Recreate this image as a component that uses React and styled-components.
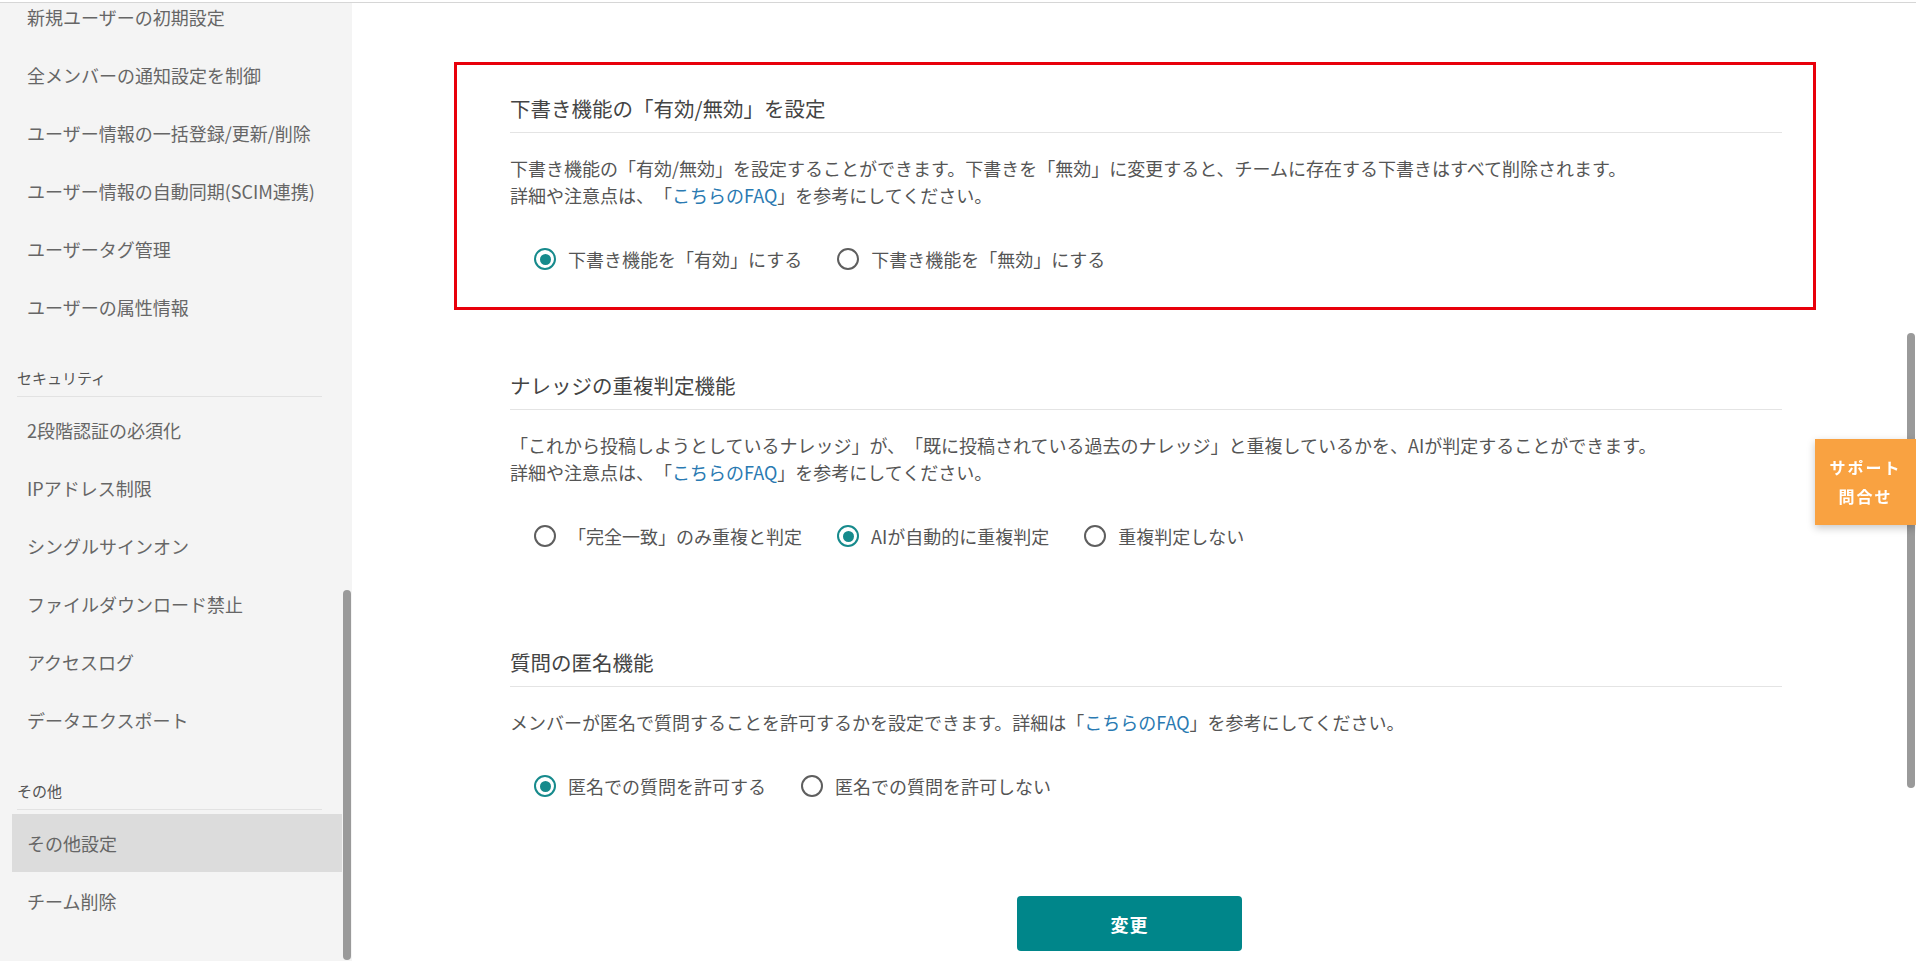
import React from "react";
import styled, { createGlobalStyle } from "styled-components";

const GlobalStyle = createGlobalStyle`
  html, body {
    margin: 0;
    padding: 0;
    background: #ffffff;
    overflow: hidden;
  }
  body {
    font-family: "Noto Sans CJK JP", "Noto Sans", "Liberation Sans", sans-serif;
    color: #555;
    text-spacing-trim: space-all;
  }
  * { box-sizing: border-box; }
`;

const TopRule = styled.div`
  height: 3px;
  background: #fff;
  border-bottom: 1px solid #d6d6d6;
`;

const Body = styled.div`
  display: flex;
  height: 958px;
`;

const Sidebar = styled.aside`
  position: relative;
  width: 352px;
  flex: 0 0 352px;
  background: #f4f4f4;
  overflow: hidden;
`;

const Nav = styled.nav`
  margin-top: -15px;
  padding: 0 10px 0 12px;
`;

const NavItem = styled.div`
  height: 58px;
  display: flex;
  align-items: center;
  padding-left: 15px;
  font-size: 18px;
  color: #666;
  background: ${(p) => (p.$active ? "#dcdcdc" : "transparent")};
  white-space: nowrap;
`;

const GroupHeader = styled.div`
  margin: 31px 20px 0 5px;
  padding-bottom: 7px;
  font-size: 15px;
  line-height: 22px;
  color: #555;
  border-bottom: 1px solid #e2e2e2;
`;

const GroupItems = styled.div`
  margin-top: ${(p) => (p.$first ? 0 : 4)}px;
`;

const Thumb = styled.div`
  position: absolute;
  right: 1px;
  top: ${(p) => p.$top}px;
  width: 8px;
  height: ${(p) => p.$height}px;
  border-radius: 4px;
  background: #9a9a9a;
`;

const Main = styled.main`
  position: relative;
  flex: 1;
  padding: 59px 100px 0 102px;
  overflow: hidden;
`;

const SectionList = styled.div`
  display: flex;
  flex-direction: column;
  gap: 29px;
`;

const Section = styled.section`
  border: 3px solid ${(p) => (p.$highlight ? "#e8000b" : "transparent")};
  padding: 29px 31px 33px 53px;
`;

const Title = styled.h2`
  margin: 0;
  font-size: 20.5px;
  line-height: 28px;
  font-weight: 400;
  color: #444;
  padding-bottom: 10px;
  border-bottom: 1px solid #e4e4e4;
`;

const Desc = styled.p`
  margin: 22px 0 0;
  font-size: 18px;
  line-height: 27px;
  color: #555;
`;

const Link = styled.a`
  color: #2a7ab2;
  text-decoration: none;
`;

const RadioGroup = styled.div`
  display: flex;
  align-items: center;
  gap: 35px;
  margin-top: 35px;
  padding-left: 24px;
  height: 30px;
`;

const RadioLabel = styled.label`
  display: flex;
  align-items: center;
  gap: 12px;
  font-size: 18px;
  color: #555;
  white-space: nowrap;
`;

const RadioCircle = styled.span`
  position: relative;
  width: 22px;
  height: 22px;
  border-radius: 50%;
  border: ${(p) => (p.$checked ? "2.5px solid #168a8c" : "2px solid #5e5e5e")};
  flex: 0 0 22px;
  &::after {
    content: "";
    display: ${(p) => (p.$checked ? "block" : "none")};
    position: absolute;
    left: 50%;
    top: 50%;
    width: 11px;
    height: 11px;
    margin: -5.5px 0 0 -5.5px;
    border-radius: 50%;
    background: #168a8c;
  }
`;

const ButtonRow = styled.div`
  display: flex;
  justify-content: center;
  margin-top: 59px;
  padding-right: 11px;
`;

const SubmitButton = styled.button`
  width: 225px;
  height: 55px;
  border: none;
  border-radius: 4px;
  background: #00868a;
  color: #fff;
  font-family: inherit;
  font-size: 18px;
  font-weight: 700;
  letter-spacing: 1px;
`;

const SupportTab = styled.div`
  position: fixed;
  top: 439px;
  right: 0;
  width: 101px;
  height: 86px;
  background: #f9a241;
  box-shadow: 0 3px 8px rgba(0, 0, 0, 0.22);
  display: flex;
  flex-direction: column;
  align-items: center;
  justify-content: center;
  color: #fff;
  font-size: 16px;
  font-weight: 700;
  line-height: 29px;
  letter-spacing: 2px;
`;

const Radio = ({ checked, children }) => (
  <RadioLabel>
    <RadioCircle $checked={checked} />
    {children}
  </RadioLabel>
);

const groups = [
  {
    header: null,
    items: [
      "新規ユーザーの初期設定",
      "全メンバーの通知設定を制御",
      "ユーザー情報の一括登録/更新/削除",
      "ユーザー情報の自動同期(SCIM連携)",
      "ユーザータグ管理",
      "ユーザーの属性情報",
    ],
  },
  {
    header: "セキュリティ",
    items: [
      "2段階認証の必須化",
      "IPアドレス制限",
      "シングルサインオン",
      "ファイルダウンロード禁止",
      "アクセスログ",
      "データエクスポート",
    ],
  },
  {
    header: "その他",
    items: ["その他設定", "チーム削除"],
  },
];

export default function App() {
  return (
    <>
      <GlobalStyle />
      <TopRule />
      <Body>
        <Sidebar>
          <Nav>
            {groups.map((g, gi) => (
              <React.Fragment key={gi}>
                {g.header && <GroupHeader>{g.header}</GroupHeader>}
                <GroupItems $first={!g.header}>
                  {g.items.map((it) => (
                    <NavItem key={it} $active={it === "その他設定"}>
                      {it}
                    </NavItem>
                  ))}
                </GroupItems>
              </React.Fragment>
            ))}
          </Nav>
          <Thumb $top={587} $height={370} />
        </Sidebar>
        <Main>
          <SectionList>
            <Section $highlight>
              <Title>下書き機能の「有効/無効」を設定</Title>
              <Desc>
                下書き機能の「有効/無効」を設定することができます。下書きを「無効」に変更すると、チームに存在する下書きはすべて削除されます。
                <br />
                詳細や注意点は、「<Link href="#">こちらのFAQ</Link>」を参考にしてください。
              </Desc>
              <RadioGroup>
                <Radio checked>下書き機能を「有効」にする</Radio>
                <Radio>下書き機能を「無効」にする</Radio>
              </RadioGroup>
            </Section>
            <Section>
              <Title>ナレッジの重複判定機能</Title>
              <Desc>
                「これから投稿しようとしているナレッジ」が、「既に投稿されている過去のナレッジ」と重複しているかを、AIが判定することができます。
                <br />
                詳細や注意点は、「<Link href="#">こちらのFAQ</Link>」を参考にしてください。
              </Desc>
              <RadioGroup>
                <Radio>「完全一致」のみ重複と判定</Radio>
                <Radio checked>AIが自動的に重複判定</Radio>
                <Radio>重複判定しない</Radio>
              </RadioGroup>
            </Section>
            <Section>
              <Title>質問の匿名機能</Title>
              <Desc>
                メンバーが匿名で質問することを許可するかを設定できます。詳細は「<Link href="#">こちらのFAQ</Link>」を参考にしてください。
              </Desc>
              <RadioGroup>
                <Radio checked>匿名での質問を許可する</Radio>
                <Radio>匿名での質問を許可しない</Radio>
              </RadioGroup>
            </Section>
          </SectionList>
          <ButtonRow>
            <SubmitButton>変更</SubmitButton>
          </ButtonRow>
          <Thumb $top={330} $height={455} />
        </Main>
      </Body>
      <SupportTab>
        <span>サポート</span>
        <span>問合せ</span>
      </SupportTab>
    </>
  );
}
